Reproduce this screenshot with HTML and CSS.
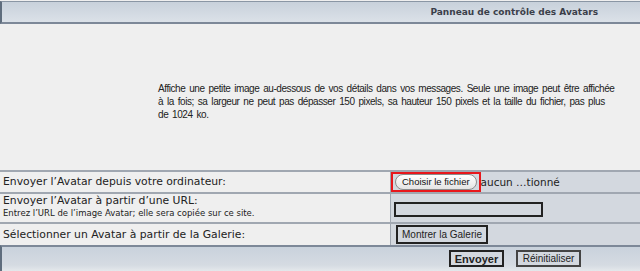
FILE: index.html
```html
<!DOCTYPE html>
<html lang="fr">
<head>
<meta charset="utf-8">
<link rel="stylesheet" href="styles.css">
</head>
<body>
<div class="panel">
  <div class="header">Panneau de contrôle des Avatars</div>
  <div class="desc">
    <p>Affiche une petite image au-dessous de vos détails dans vos messages. Seule une image peut être affichée à la fois; sa largeur ne peut pas dépasser 150 pixels, sa hauteur 150 pixels et la taille du fichier, pas plus de 1024 ko.</p>
  </div>
  <div class="row row-file">
    <div class="label">Envoyer l’Avatar depuis votre ordinateur:</div>
    <div class="field">
      <span class="filewrap"><span class="filebtn">Choisir le fichier</span></span><span class="filename">aucun …tionné</span>
    </div>
  </div>
  <div class="row row-url">
    <div class="label">Envoyer l’Avatar à partir d’une URL:<div class="hint">Entrez l’URL de l’image Avatar; elle sera copiée sur ce site.</div></div>
    <div class="field"><span class="urlbox"></span></div>
  </div>
  <div class="row row-gallery">
    <div class="label">Sélectionner un Avatar à partir de la Galerie:</div>
    <div class="field"><span class="btn">Montrer la Galerie</span></div>
  </div>
  <div class="footer">
    <span class="btn btn-main">Envoyer</span>
    <span class="btn btn-reset">Réinitialiser</span>
  </div>
</div>
</body>
</html>
```
FILE: styles.css
```css
html, body {
  margin: 0;
  padding: 0;
  background: #efefef;
  font-family: "Liberation Sans", Arial, sans-serif;
  color: #222;
}
.panel {
  width: 640px;
  height: 271px;
  overflow: hidden;
  padding-top: 1px;
  box-sizing: border-box;
}
.header {
  height: 20px;
  border-top: 1px solid #8a96a4;
  border-bottom: 2px solid #7d8898;
  border-left: 2px solid #5f6d7d;
  background: linear-gradient(#c8d1db, #dbe1e8);
  font-family: "DejaVu Sans", Verdana, sans-serif;
  font-weight: bold;
  font-size: 9px;
  color: #3b3f4a;
  text-align: right;
  line-height: 20px;
  padding-right: 42px;
}
.desc {
  height: 146px;
  box-sizing: border-box;
  padding: 58px 22px 0 158px;
  font-size: 10px;
  letter-spacing: -0.43px;
  word-spacing: 1.5px;
  line-height: 13px;
  color: #222;
}
.desc p { margin: 0; }
.row {
  display: grid;
  grid-template-columns: 391px 1fr;
  border-top: 2px solid #a0a7b1;
}
.label {
  background: #efefef;
  padding: 0 3px;
  color: #222;
  border-right: 1px solid #a0a7b1;
  font-family: "DejaVu Sans", Verdana, sans-serif;
  font-size: 10.8px;
  line-height: 14px;
  display: flex;
  flex-direction: column;
  justify-content: center;
}
.row-file { height: 20px; }
.row-url { height: 28px; }
.row-url .label { justify-content: flex-start; }
.row-gallery { height: 21px; }
.hint {
  font-size: 8.5px;
  line-height: 10px;
}
.field {
  background: #d3d8df;
  display: flex;
  align-items: center;
  padding-left: 3px;
}
.row-file .field { padding-left: 0; }
.filewrap {
  border: 2px solid #e8171c;
  padding: 1px 2px 1px 2px;
  display: inline-flex;
  box-sizing: border-box;
  height: 20px;
  align-items: center;
}
.filebtn {
  border: 1px solid #8c8c8c;
  border-radius: 8px;
  background: linear-gradient(#ffffff, #e4e4e4);
  font-size: 9.5px;
  padding: 1px 6px 1px 6px;
  line-height: 12px;
  color: #111;
}
.filename {
  font-family: "DejaVu Sans", Verdana, sans-serif;
  font-size: 10.5px;
  color: #222;
}
.urlbox {
  display: block;
  width: 149px;
  height: 15px;
  box-sizing: border-box;
  border: 2px solid #222;
  background: #d3d8df;
  margin-top: 2px;
}
.btn {
  display: inline-flex;
  align-items: center;
  justify-content: center;
  box-sizing: border-box;
  border: 2px solid #222;
  background: #d3d8df;
  font-size: 10px;
  color: #222;
}
.row-gallery .btn {
  width: 92px;
  height: 19px;
  margin-left: 2px;
}
.footer {
  border-top: 2px solid #7d8898;
  border-left: 2px solid #5f6d7d;
  height: 30px;
  background: linear-gradient(#c9d2dc 0%, #d5dbe2 55%, #e2e6ea 70%, #e6e9ed 100%);
  display: flex;
  align-items: flex-start;
  padding: 3px 0 0 447px;
  gap: 12px;
}
.btn-main {
  font-weight: bold;
  font-size: 11px;
  width: 55px;
  height: 17px;
}
.btn-reset {
  border-color: #444;
  width: 65px;
  height: 17px;
}
```
